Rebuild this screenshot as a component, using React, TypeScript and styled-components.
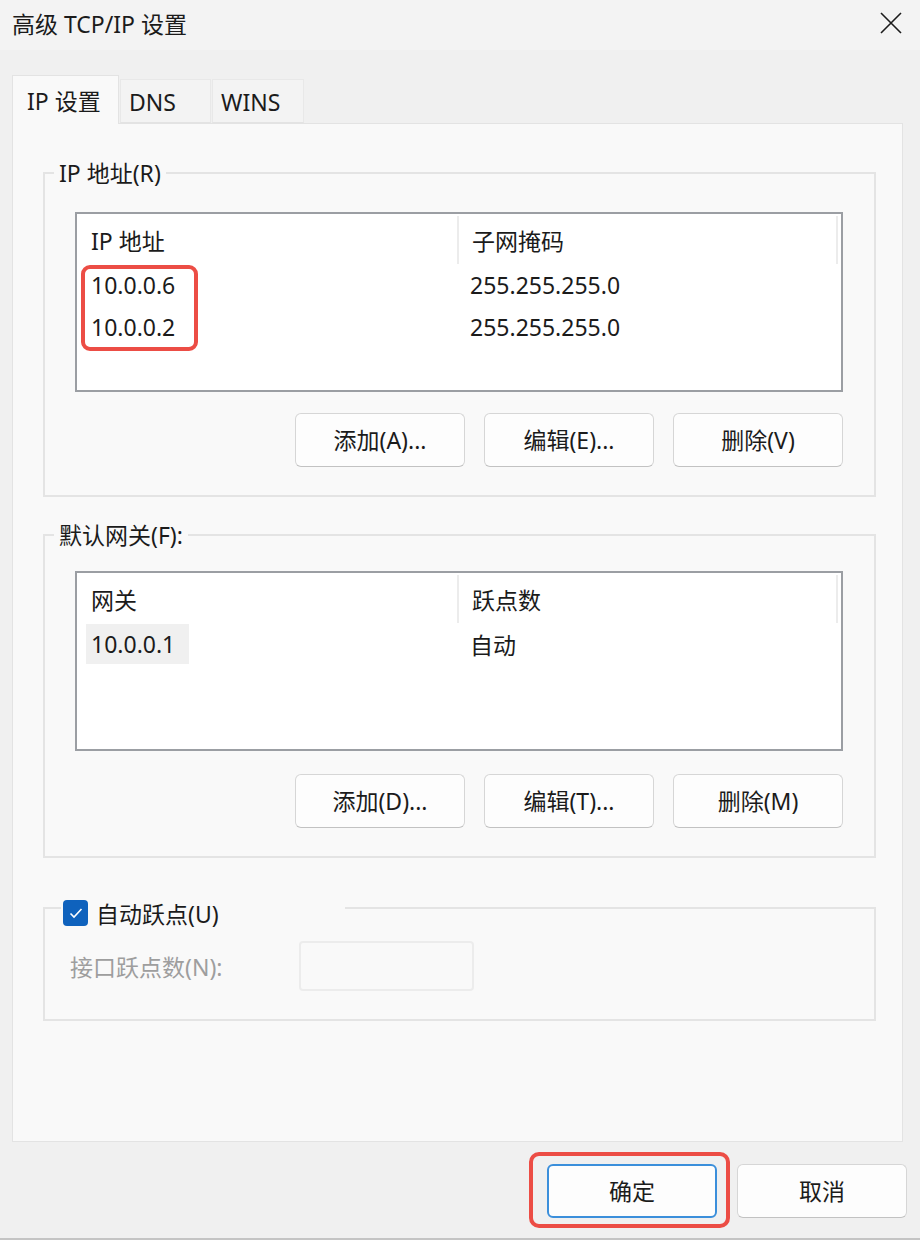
import { createGlobalStyle } from "styled-components";
import styled from "styled-components";

const GlobalStyle = createGlobalStyle`
  html, body {
    margin: 0;
    padding: 0;
    background: #f0f0f0;
  }
  * { box-sizing: border-box; }
  body {
    font-family: "Noto Sans", "Noto Sans CJK SC", sans-serif;
    font-size: 23px;
    color: #1b1b1b;
  }
`;

// STYLED COMPONENTS
const Window = styled.div`
  width: 920px;
  height: 1240px;
  background: #f0f0f0;
  border-bottom: 2px solid #c4c4c4;
  display: flex;
  flex-direction: column;
`;

const TitleBar = styled.div`
  height: 50px;
  background: #f3f3f3;
  display: flex;
  align-items: center;
  justify-content: space-between;
  padding: 0 17px 2px 12px;
`;

const Title = styled.span`
  font-size: 23px;
  line-height: 1;
`;

const CloseButton = styled.span`
  display: flex;
  width: 22px;
  height: 22px;
  margin-right: 1px;
  margin-top: -2px;
`;

const TabStrip = styled.div`
  display: flex;
  align-items: flex-end;
  height: 48px;
  margin-top: 25px;
  padding-left: 12px;
  position: relative;
  z-index: 1;
`;

const Tab = styled.div<{ $active?: boolean; $w: number }>`
  width: ${(p) => p.$w}px;
  height: ${(p) => (p.$active ? 49 : 44)}px;
  padding-left: ${(p) => (p.$active ? 14 : 8)}px;
  display: flex;
  align-items: center;
  background: ${(p) => (p.$active ? "#f9f9f9" : "#f3f3f3")};
  border: 1px solid ${(p) => (p.$active ? "#e3e3e3" : "#e8e8e8")};
  border-bottom: ${(p) => (p.$active ? "none" : "1px solid #e3e3e3")};
  margin-bottom: ${(p) => (p.$active ? -1 : 0)}px;
  margin-right: 1px;
  padding-top: ${(p) => (p.$active ? 0 : 2)}px;
`;

const Panel = styled.div`
  margin: 0 17px 0 12px;
  height: 1019px;
  background: #f9f9f9;
  border: 1px solid #e3e3e3;
  padding: 34px 26px 0 30px;
  display: flex;
  flex-direction: column;
`;

const Group = styled.fieldset<{ $mt?: number; $pt?: number }>`
  margin: ${(p) => p.$mt ?? 0}px 0 0 0;
  padding: ${(p) => p.$pt ?? 24}px 31px 28px 30px;
  border: 2px solid #e4e4e4;
  min-width: 0;
`;

const Legend = styled.legend`
  margin-left: -21px;
  padding: 0 5px;
  line-height: 30px;
  height: 30px;
`;

const CheckLegend = styled.legend`
  margin-left: -14px;
  padding: 10px 0 0 2px;
  width: 284px;
  height: 40px;
  display: flex;
  align-items: center;
  gap: 8px;
`;

const CheckBox = styled.span`
  width: 25px;
  height: 26px;
  border-radius: 4px;
  background: #0f62bd;
  display: flex;
  align-items: center;
  justify-content: center;
`;

const ListBox = styled.div`
  position: relative;
  height: 180px;
  background: #ffffff;
  border: 2px solid #9b9ea3;
  display: grid;
  grid-template-columns: 380px 379px 1fr;
  grid-auto-rows: 42px;
  grid-template-rows: 50px;
  align-content: start;
`;

const HeadCell = styled.div<{ $sep?: boolean }>`
  display: flex;
  align-items: center;
  padding-left: ${(p) => (p.$sep ? 13 : 14)}px;
  margin-top: 2px;
  border-left: ${(p) => (p.$sep ? "2px solid #ececec" : "none")};
`;

const Cell = styled.div<{ $col2?: boolean }>`
  display: flex;
  align-items: center;
  padding-left: ${(p) => (p.$col2 ? 13 : 9)}px;
`;

const CellText = styled.span<{ $selected?: boolean }>`
  padding: 0 ${(p) => (p.$selected ? 14 : 5)}px 0 5px;
  height: 40px;
  line-height: 40px;
  background: ${(p) => (p.$selected ? "#f0f0f0" : "transparent")};
`;

const Highlight = styled.div<{ $l: number; $t: number; $w: number; $h: number; $r: number }>`
  position: absolute;
  left: ${(p) => p.$l}px;
  top: ${(p) => p.$t}px;
  width: ${(p) => p.$w}px;
  height: ${(p) => p.$h}px;
  border: 4px solid #ec4d45;
  border-radius: ${(p) => p.$r}px;
  pointer-events: none;
`;

const ButtonRow = styled.div<{ $mt: number }>`
  display: flex;
  justify-content: flex-end;
  gap: 19px;
  margin-top: ${(p) => p.$mt}px;
  padding-right: 0;
`;

const Button = styled.button<{ $primary?: boolean }>`
  width: 170px;
  height: 54px;
  font: inherit;
  font-size: 23px;
  color: #1b1b1b;
  background: #fdfdfd;
  border-radius: 6px;
  border: ${(p) => (p.$primary ? "2px solid #3b8fdb" : "1.5px solid #d6d6d6")};
  border-bottom-color: ${(p) => (p.$primary ? "#3b8fdb" : "#c2c2c2")};
  display: flex;
  align-items: center;
  justify-content: center;
  padding: 0 0 2px;
`;

const MetricRow = styled.div`
  display: flex;
  align-items: center;
  margin: -11px 0 0 -5px;
`;

const MetricLabel = styled.span`
  color: #9e9e9e;
  width: 229px;
`;

const MetricInput = styled.div`
  width: 175px;
  height: 50px;
  border: 2px solid #ececec;
  border-radius: 4px;
  background: #f9f9f9;
`;

const Footer = styled.div`
  display: flex;
  justify-content: flex-end;
  gap: 20px;
  padding-right: 13px;
  margin-top: 22px;
`;

const Marked = styled.div`
  position: relative;
  display: flex;
`;

// =============================================================
type Row = { a: string; b: string; selected?: boolean };

const ipRows: Row[] = [
  { a: "10.0.0.6", b: "255.255.255.0" },
  { a: "10.0.0.2", b: "255.255.255.0" },
];

const gwRows: Row[] = [{ a: "10.0.0.1", b: "自动", selected: true }];
// =============================================================

function List(props: { head: [string, string]; rows: Row[]; children?: React.ReactNode }) {
  const { head, rows, children } = props;
  return (
    <ListBox>
      <HeadCell>{head[0]}</HeadCell>
      <HeadCell $sep>{head[1]}</HeadCell>
      <HeadCell $sep />
      {rows.map((r) => [
        <Cell key={r.a + "-a"}>
          <CellText $selected={r.selected}>{r.a}</CellText>
        </Cell>,
        <Cell key={r.a + "-b"} $col2>
          {r.b}
        </Cell>,
        <Cell key={r.a + "-c"} />,
      ])}
      {children}
    </ListBox>
  );
}

export default function App() {
  return (
    <>
      <GlobalStyle />
      <Window>
        <TitleBar>
          <Title>高级 TCP/IP 设置</Title>
          <CloseButton>
            <svg width="22" height="22" viewBox="0 0 22 22">
              <path d="M1 1L21 21M21 1L1 21" stroke="#1b1b1b" strokeWidth="1.6" />
            </svg>
          </CloseButton>
        </TitleBar>

        <TabStrip>
          <Tab $active $w={107}>IP 设置</Tab>
          <Tab $w={91}>DNS</Tab>
          <Tab $w={92}>WINS</Tab>
        </TabStrip>

        <Panel>
          <Group>
            <Legend>IP 地址(R)</Legend>
            <List head={["IP 地址", "子网掩码"]} rows={ipRows}>
              <Highlight $l={4} $t={51} $w={117} $h={86} $r={9} />
            </List>
            <ButtonRow $mt={21}>
              <Button>添加(A)...</Button>
              <Button>编辑(E)...</Button>
              <Button>删除(V)</Button>
            </ButtonRow>
          </Group>

          <Group $mt={23} $pt={21}>
            <Legend>默认网关(F):</Legend>
            <List head={["网关", "跃点数"]} rows={gwRows} />
            <ButtonRow $mt={23}>
              <Button>添加(D)...</Button>
              <Button>编辑(T)...</Button>
              <Button>删除(M)</Button>
            </ButtonRow>
          </Group>

          <Group $mt={30}>
            <CheckLegend>
              <CheckBox>
                <svg width="14" height="12" viewBox="0 0 14 12">
                  <path d="M1.5 6.5L5 10L12.5 2" fill="none" stroke="#ffffff" strokeWidth="1.6" />
                </svg>
              </CheckBox>
              自动跃点(U)
            </CheckLegend>
            <MetricRow>
              <MetricLabel>接口跃点数(N):</MetricLabel>
              <MetricInput />
            </MetricRow>
          </Group>
        </Panel>

        <Footer>
          <Marked>
            <Button $primary>确定</Button>
            <Highlight $l={-18} $t={-12} $w={201} $h={76} $r={10} />
          </Marked>
          <Button>取消</Button>
        </Footer>
      </Window>
    </>
  );
}
